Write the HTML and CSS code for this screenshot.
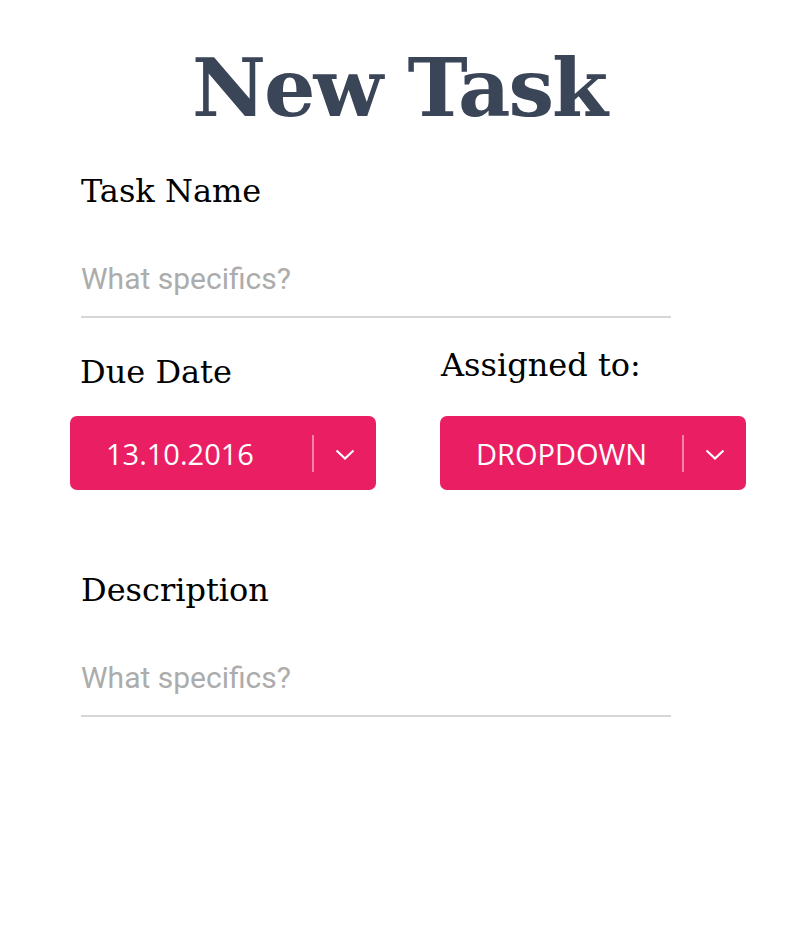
FILE: index.html
```html
<!DOCTYPE html>
<html>
<head>
<meta charset="utf-8">
<link rel="stylesheet" href="styles.css">
</head>
<body>
<div class="page">
  <h1 class="title">New Task</h1>
  <div class="field">
    <div class="label">Task Name</div>
    <div class="input">What specifics?</div>
  </div>
  <div class="row">
    <div class="col">
      <div class="label label-due">Due Date</div>
      <div class="select">
        <span class="select-text">13.10.2016</span>
        <span class="divider"></span>
        <span class="chev"><svg width="20" height="12" viewBox="0 0 20 12"><path d="M1.5 1.5 L10 9.5 L18.5 1.5" fill="none" stroke="#fff" stroke-width="2.2"/></svg></span>
      </div>
    </div>
    <div class="col">
      <div class="label label-assigned">Assigned to:</div>
      <div class="select">
        <span class="select-text">DROPDOWN</span>
        <span class="divider"></span>
        <span class="chev"><svg width="20" height="12" viewBox="0 0 20 12"><path d="M1.5 1.5 L10 9.5 L18.5 1.5" fill="none" stroke="#fff" stroke-width="2.2"/></svg></span>
      </div>
    </div>
  </div>
  <div class="field field-desc">
    <div class="label">Description</div>
    <div class="input">What specifics?</div>
  </div>
</div>
</body>
</html>
```
FILE: styles.css
```css
html, body {
  margin: 0;
  padding: 0;
  background: #fff;
}
.page {
  width: 798px;
  padding-top: 38px;
}
.title {
  margin: 0;
  text-align: center;
  font-family: "DejaVu Serif", serif;
  font-weight: bold;
  font-size: 81px;
  line-height: 100px;
  color: #3a4557;
  letter-spacing: -2px;
}
.field {
  margin-left: 81px;
  width: 590px;
}
.label {
  font-family: "DejaVu Serif", serif;
  font-size: 32px;
  line-height: 40px;
  color: #000;
}
.field .label {
  margin-top: 33px;
}
.input {
  margin-top: 51px;
  font-family: Roboto, sans-serif;
  font-size: 30px;
  line-height: 34px;
  color: #acacac;
  padding-bottom: 20px;
  border-bottom: 2px solid #d6d6d6;
}
.row {
  display: flex;
  gap: 64px;
  margin-left: 70px;
  margin-top: 27px;
}
.col {
  width: 306px;
}
.label-due {
  padding-left: 10px;
  margin-top: 7px;
}
.label-assigned {
  padding-left: 1px;
}
.select {
  display: flex;
  align-items: center;
  height: 74px;
  background: #e91e63;
  border-radius: 7px;
  margin-top: 31px;
  padding-left: 36px;
  box-sizing: border-box;
}
.label-due + .select {
  margin-top: 24px;
}
.select-text {
  flex: 1;
  font-family: "Open Sans", sans-serif;
  font-size: 29px;
  color: #fff;
}
.divider {
  width: 2px;
  height: 37px;
  background: rgba(255, 255, 255, 0.45);
}
.chev {
  width: 62px;
  display: flex;
  justify-content: center;
  align-items: center;
  padding-top: 4px;
}
.chev svg {
  display: block;
}
.field-desc .label {
  margin-top: 80px;
}
```
